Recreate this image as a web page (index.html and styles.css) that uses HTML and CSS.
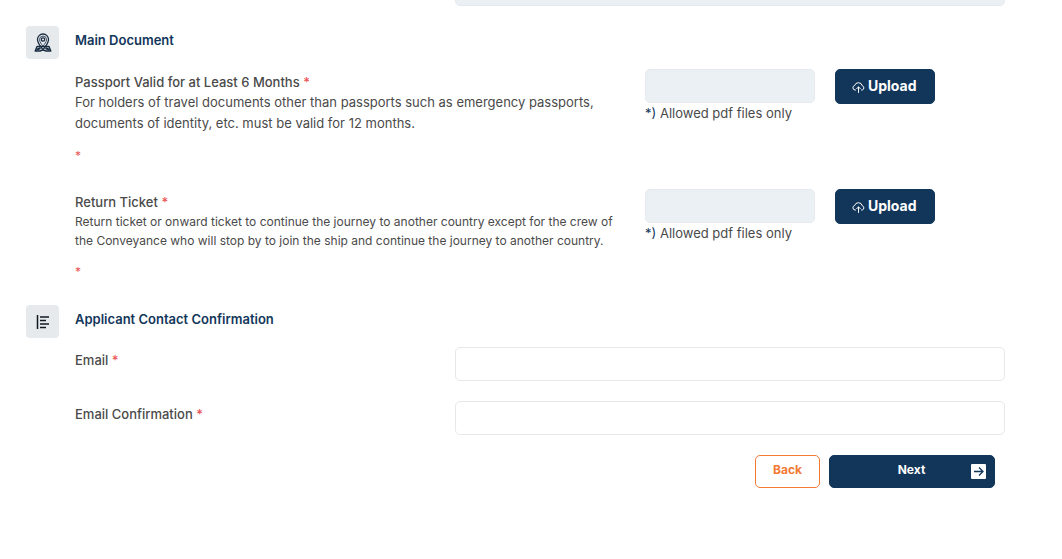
FILE: index.html
```html
<!DOCTYPE html>
<html lang="en">
<head>
<meta charset="utf-8">
<meta name="viewport" content="width=device-width, initial-scale=1">
<title>Main Document</title>
<link rel="stylesheet" href="styles.css">
</head>
<body>
<form class="form">
  <div class="body grid previous">
    <input class="field locked wide" type="text" aria-label="Previous field" readonly>
  </div>

  <section class="section">
    <span class="badge">
      <svg width="18" height="20" viewBox="0 0 18 20" fill="none" stroke="#172b40" stroke-width="1.3" stroke-linejoin="round" aria-hidden="true">
        <path d="M9 17C7 13.500 3.500 10.500 3.500 6.500a5.500 5.500 0 0 1 11 0C14.500 10.500 11 13.500 9 17z"/>
        <path d="M9 13.500C7.600 11 5.500 9 5.500 6.600a3.500 3.500 0 0 1 7 0C12.500 9 10.400 11 9 13.500z" stroke-width=".8"/>
        <circle cx="9" cy="6.500" r="1.700"/>
        <path d="M4.500 13.500H3L1.200 18H6l3-1.200 3 1.200h4.800L15 13.500h-1.500z" stroke-width="1.400"/>
        <path d="M2.500 16.800 6.500 15M15.500 16.800 11.500 15" stroke-width="2"/>
      </svg>
    </span>
    <div class="body">
      <h2 class="title">Main Document</h2>

      <div class="grid document">
        <div class="info">
          <label for="passport">Passport Valid for at Least 6 Months <span class="required">*</span></label>
          <p class="description">For holders of travel documents other than passports such as emergency passports, documents of identity, etc. must be valid for 12 months.</p>
          <p class="mark required">*</p>
        </div>
        <div>
          <input class="field locked" id="passport" type="text" readonly>
          <p class="note"><span class="star">*)</span> Allowed pdf files only</p>
        </div>
        <div>
          <button class="button upload" type="button">
            <svg width="13" height="12" viewBox="0 0 13 12" fill="none" stroke="currentColor" stroke-linecap="round" stroke-linejoin="round" aria-hidden="true"><path d="M3.500 9H3A2.300 2.300 0 0 1 2.600 4.500 4 4 0 0 1 10.300 4.800 2.200 2.200 0 0 1 10.300 9H9.500M6.500 11.500V6M4.700 7.700 6.500 5.900 8.300 7.700"/></svg>
            Upload
          </button>
        </div>
      </div>

      <div class="grid document">
        <div class="info">
          <label for="ticket">Return Ticket <span class="required">*</span></label>
          <p class="description small">Return ticket or onward ticket to continue the journey to another country except for the crew of the Conveyance who will stop by to join the ship and continue the journey to another country.</p>
          <p class="mark required">*</p>
        </div>
        <div>
          <input class="field locked" id="ticket" type="text" readonly>
          <p class="note"><span class="star">*)</span> Allowed pdf files only</p>
        </div>
        <div>
          <button class="button upload" type="button">
            <svg width="13" height="12" viewBox="0 0 13 12" fill="none" stroke="currentColor" stroke-linecap="round" stroke-linejoin="round" aria-hidden="true"><path d="M3.500 9H3A2.300 2.300 0 0 1 2.600 4.500 4 4 0 0 1 10.300 4.800 2.200 2.200 0 0 1 10.300 9H9.500M6.500 11.500V6M4.700 7.700 6.500 5.900 8.300 7.700"/></svg>
            Upload
          </button>
        </div>
      </div>
    </div>
  </section>

  <section class="section">
    <span class="badge">
      <svg width="14" height="16" viewBox="0 0 14 16" fill="none" stroke="#101820" stroke-width="1.500" aria-hidden="true"><path d="M1.500 1v14M4 3h9M4 6.500h6M4 10h9M4 13.500h6"/></svg>
    </span>
    <div class="body">
      <h2 class="title">Applicant Contact Confirmation</h2>
      <div class="grid contact">
        <label class="contact-label" for="email">Email <span class="required">*</span></label>
        <input class="field wide" id="email" type="email">
      </div>
      <div class="grid contact">
        <label class="contact-label" for="email2">Email Confirmation <span class="required">*</span></label>
        <input class="field wide" id="email2" type="email">
      </div>
      <div class="actions">
        <button class="button back" type="button">Back</button>
        <button class="button next" type="submit">
          <span class="next-text">Next</span>
          <svg width="17" height="15" viewBox="0 0 17 15" aria-hidden="true"><rect x="1" width="15" height="15" rx="1" fill="#fff"/><path d="M4 7.500h9M9 3.500l4 4L9 11.500" fill="none" stroke="#12365a" stroke-width="1.300"/></svg>
        </button>
      </div>
    </div>
  </section>
</form>
</body>
</html>
```
FILE: styles.css
```css
* { box-sizing: border-box; }
body {
  margin: 0;
  background: #fff;
  color: #4a4a4a;
  font: 13px/20px Inter, "Liberation Sans", sans-serif;
}
p, h2 { margin: 0; }
.form { padding: 0 57px 0 26px; }
.grid {
  display: grid;
  grid-template-columns: repeat(5, 1fr);
  column-gap: 20px;
  align-items: start;
}
.previous { margin: -28px 0 20px 49px; }
.section {
  display: grid;
  grid-template-columns: 33px 1fr;
  column-gap: 16px;
}
.badge {
  display: flex;
  align-items: center;
  justify-content: center;
  height: 33px;
  border-radius: 4px;
  background: #e6eaed;
}
.title {
  padding-top: 4px;
  color: #12365a;
  font-size: 13px;
  line-height: 20px;
  font-weight: 600;
}
.document { min-height: 120px; }
.title + .document { margin-top: 19px; }
.document + .document { min-height: 116px; }
.info { grid-column: span 3; }
.info label { display: block; padding-top: 3px; }
label { font-weight: 500; }
.description { line-height: 21px; }
.small { font-size: 12px; line-height: 19px; }
.required { color: #ea5455; }
.mark { margin-top: 12px; font-size: 12px; }
.field {
  display: block;
  width: 100%;
  height: 34px;
  padding: 0 12px;
  border: 1px solid #e8e8ec;
  border-radius: 5px;
  background: #fff;
  font: inherit;
}
.locked { border-color: #e6eaee; background: #ebf0f5; }
.wide { grid-column: 3 / -1; }
.star { color: #12365a; }
.button {
  border: 1px solid #12365a;
  border-radius: 5px;
  background: #12365a;
  color: #fff;
  font: bold 12px/18px Inter, "Liberation Sans", sans-serif;
}
.upload {
  display: flex;
  align-items: center;
  gap: 3px;
  height: 35px;
  padding: 0 17px 2px 16px;
  font-size: 14px;
}
.upload svg { margin-top: 3px; }
.contact { margin-top: 18px; }
.contact + .contact { margin-top: 20px; }
.contact-label { grid-column: span 2; padding-top: 3px; }
.actions {
  display: flex;
  justify-content: flex-end;
  gap: 9px;
  padding: 20px 10px 0 0;
}
.back {
  width: 65px;
  height: 33px;
  padding: 0 0 3px;
  border-color: #f37a34;
  background: #fff;
  color: #f37a34;
}
.next {
  display: flex;
  align-items: center;
  width: 166px;
  height: 33px;
  padding: 0 7px 3px 23px;
}
.next-text { flex: 1; }
.next svg { margin-top: 2px; }
```
